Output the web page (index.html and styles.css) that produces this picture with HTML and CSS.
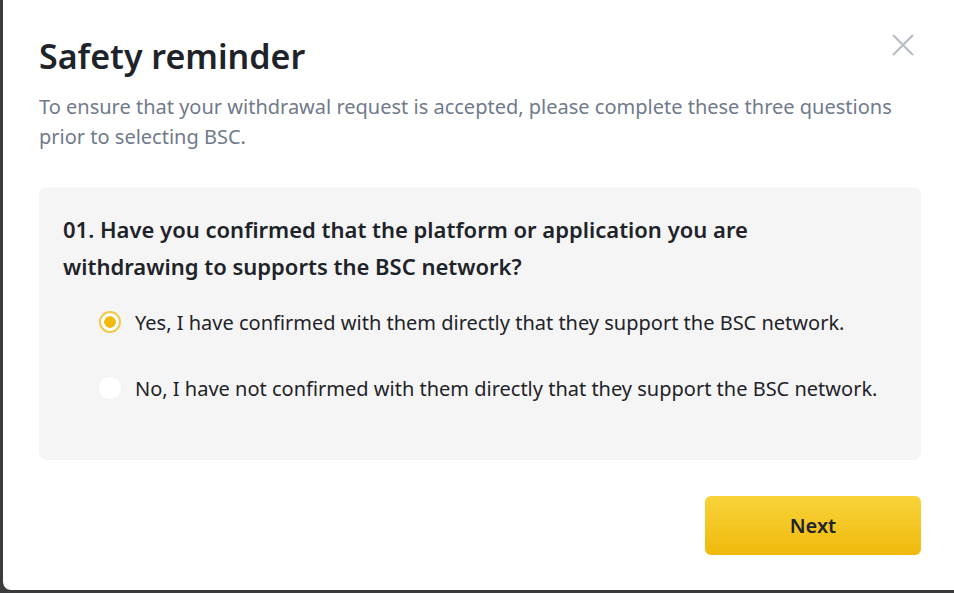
FILE: index.html
```html
<!DOCTYPE html>
<html>
<head>
	<title>Safety reminder</title>
	<link rel="stylesheet" href="styles.css">
</head>
<body>
	<div class="modal">
		<div class="modal-head">
			<h1 class="title">Safety reminder</h1>
			<button class="close" type="button" aria-label="Close">
				<svg width="24" height="24" viewBox="0 0 24 24">
					<path d="M2 2L22 22M22 2L2 22" stroke="#b7bdc6" stroke-width="2.2" fill="none"/>
				</svg>
			</button>
		</div>
		<p class="intro">To ensure that your withdrawal request is accepted, please complete these three questions prior to selecting BSC.</p>

		<div class="question">
			<h2 class="question-title">01. Have you confirmed that the platform or application you are withdrawing to supports the BSC network?</h2>
			<label class="option">
				<input type="radio" name="q1" checked>
				<span class="dot"></span>
				<span>Yes, I have confirmed with them directly that they support the BSC network.</span>
			</label>
			<label class="option">
				<input type="radio" name="q1">
				<span class="dot"></span>
				<span>No, I have not confirmed with them directly that they support the BSC network.</span>
			</label>
		</div>

		<div class="actions">
			<button class="next" type="button">Next</button>
		</div>
	</div>
</body>
</html>
```

FILE: styles.css
```css
html, body {
	margin: 0;
	height: 100%;
}
body {
	background-color: #3b3b3d;
	overflow: hidden;
	font-family: "Noto Sans", "Open Sans", sans-serif;
	color: #1e2329;
}
.modal {
	box-sizing: border-box;
	margin-left: 3px;
	width: 980px;
	height: 590px;
	background-color: white;
	border-radius: 0 0 0 8px;
	padding: 30px 0 0 36px;
}
.modal-head {
	display: flex;
	justify-content: space-between;
	align-items: flex-start;
	width: 882px;
}
.title {
	margin: 0;
	font-size: 34px;
	font-weight: 600;
	line-height: 52px;
}
.close {
	border: none;
	background: none;
	padding: 0;
	margin: 3px 6px 0 0;
	cursor: pointer;
}
.intro {
	margin: 10px 0 0 0;
	width: 870px;
	font-size: 20px;
	line-height: 30px;
	color: #707a8a;
}
.question {
	box-sizing: border-box;
	width: 882px;
	height: 273px;
	margin-top: 35px;
	padding: 24px 24px;
	background-color: #f5f5f5;
	border-radius: 8px;
}
.question-title {
	max-width: 720px;
	margin: 0 0 4px 0;
	font-size: 22px;
	font-weight: 600;
	line-height: 37px;
}
.option {
	display: flex;
	align-items: center;
	gap: 14px;
	height: 66px;
	padding-left: 36px;
	font-size: 20px;
	cursor: pointer;
}
.option input {
	display: none;
}
.dot {
	box-sizing: border-box;
	width: 22px;
	height: 22px;
	border-radius: 50%;
	background-color: white;
	flex-shrink: 0;
}
.option input:checked + .dot {
	border: 2px solid #f0c94a;
	background: radial-gradient(circle, #f0b90b 0 5.5px, white 6px);
}
.actions {
	width: 882px;
	display: flex;
	justify-content: flex-end;
	margin-top: 36px;
}
.next {
	width: 216px;
	height: 59px;
	border: none;
	border-radius: 6px;
	background: linear-gradient(#f8d33a, #f0b90b);
	font-family: inherit;
	font-size: 20px;
	font-weight: 600;
	color: #1e2329;
	cursor: pointer;
}
```
